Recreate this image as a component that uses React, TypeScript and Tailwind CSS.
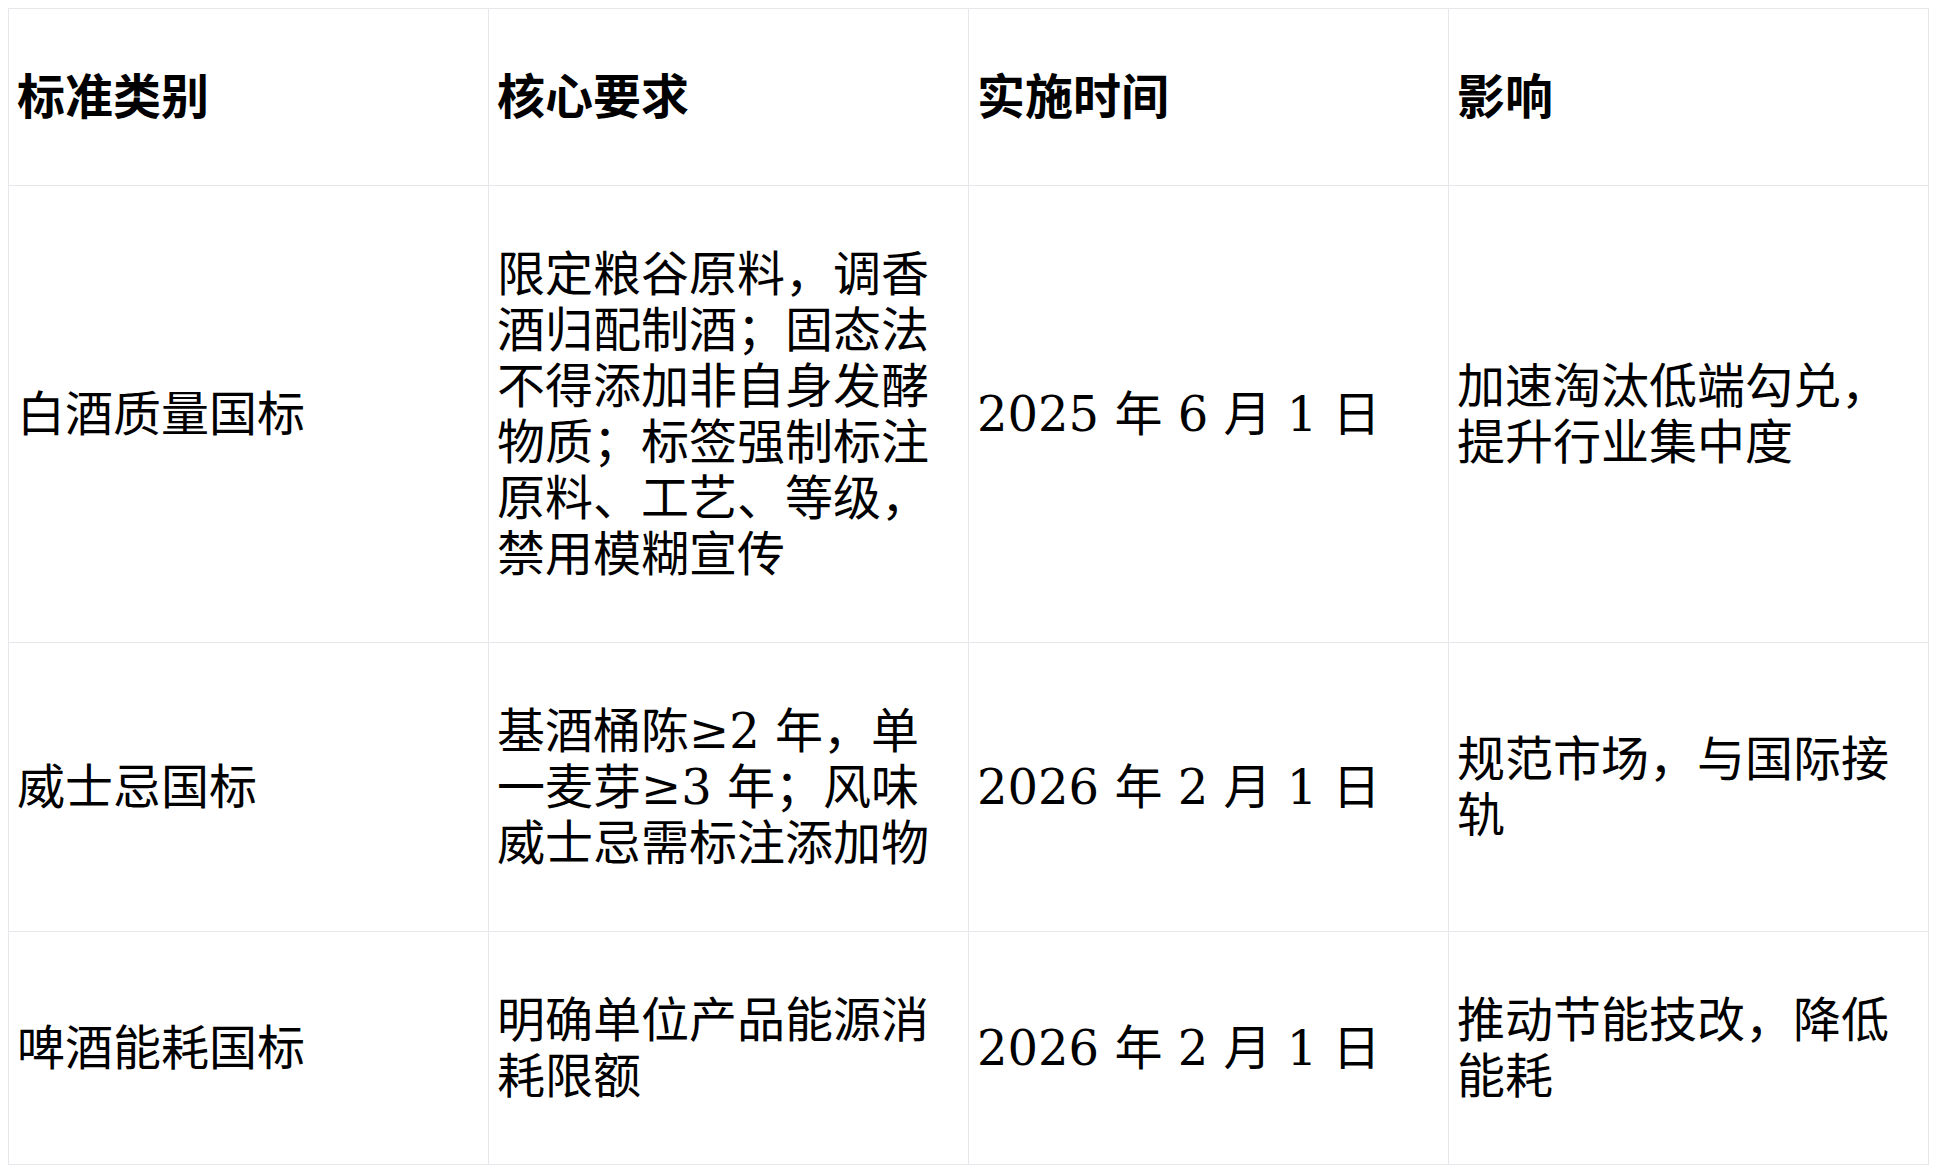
const rows = [
  {
    category: '白酒质量国标',
    requirement: '限定粮谷原料，调香酒归配制酒；固态法不得添加非自身发酵物质；标签强制标注原料、工艺、等级，禁用模糊宣传',
    date: '2025 年 6 月 1 日',
    impact: '加速淘汰低端勾兑，提升行业集中度',
  },
  {
    category: '威士忌国标',
    requirement: '基酒桶陈≥2 年，单一麦芽≥3 年；风味威士忌需标注添加物',
    date: '2026 年 2 月 1 日',
    impact: '规范市场，与国际接轨',
  },
  {
    category: '啤酒能耗国标',
    requirement: '明确单位产品能源消耗限额',
    date: '2026 年 2 月 1 日',
    impact: '推动节能技改，降低能耗',
  },
]

const headers = ['标准类别', '核心要求', '实施时间', '影响']

export default function App() {
  return (
    <div className="p-2 bg-white min-h-screen">
      <table
        className="w-[1921px] table-fixed border-collapse text-[48px] leading-[56px] text-black"
        style={{ fontFamily: '"DejaVu Serif", "Noto Sans CJK SC", serif' }}
      >
        <thead>
          <tr>
            {headers.map(h => (
              <th key={h} className="border border-[#e5e7eb] px-2 py-[60px] text-left align-middle font-bold">
                {h}
              </th>
            ))}
          </tr>
        </thead>
        <tbody>
          {rows.map(row => (
            <tr key={row.category}>
              <td className="border border-[#e5e7eb] px-2 py-[60px] align-middle">{row.category}</td>
              <td className="border border-[#e5e7eb] px-2 py-[60px] align-middle">{row.requirement}</td>
              <td className="border border-[#e5e7eb] px-2 py-[60px] align-middle">{row.date}</td>
              <td className="border border-[#e5e7eb] px-2 py-[60px] align-middle">{row.impact}</td>
            </tr>
          ))}
        </tbody>
      </table>
    </div>
  )
}
